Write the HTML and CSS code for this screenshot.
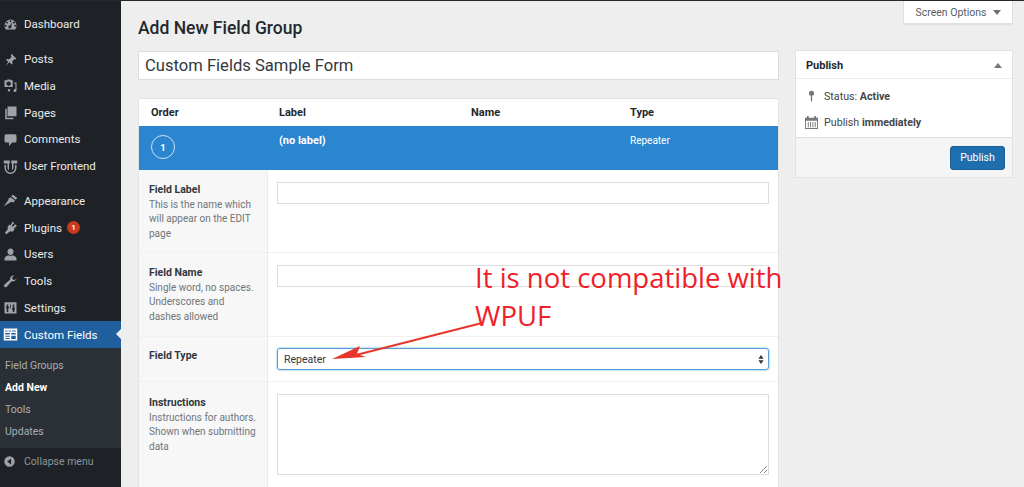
FILE: index.html
```html
<!DOCTYPE html>
<html lang="en">
<head>
<meta charset="utf-8">
<title>Add New Field Group</title>
<link rel="stylesheet" href="styles.css">
</head>
<body>
<div class="app">
  <nav class="sidebar">
    <ul class="menu first">
      <li class="item"><svg class="ico" viewBox="0 0 20 20"><path d="M3.800 16.500A8 8 0 1 1 16.200 16.500ZM10 4.200a1.200 1.200 0 1 0 .01 0ZM5.400 6.200a1.200 1.200 0 1 0 .01 0ZM14.600 6.200a1.200 1.200 0 1 0 .01 0ZM3.600 10.400a1.200 1.200 0 1 0 .01 0ZM16.400 10.400a1.200 1.200 0 1 0 .01 0ZM12.800 6.800 9.200 11.200a2 2 0 1 0 1.700 1Z" fill-rule="evenodd"/></svg>Dashboard</li>
    </ul>
    <ul class="menu">
      <li class="item"><svg class="ico" viewBox="0 0 20 20"><path d="M11 2l7 7-1.400 1-1.200-.6-3 3 .4 3.100-1.200 1.200-3-3-5.600 5L7 13.400l-3-3 1.200-1.200 3.100.4 3-3-.6-1.200Z"/></svg>Posts</li>
      <li class="item"><svg class="ico" viewBox="0 0 20 20"><path fill-rule="evenodd" d="M2 3h3l1-1h4l1 1h2v9H2ZM7.500 4.500a3 3 0 1 0 .01 0ZM15 6h3v10.500a2 2 0 1 1-2-2h.6V7.500H15ZM8 14.500a1.700 1.700 0 1 1-1.700 1.700 1.700 1.700 0 0 1 1.700-1.700Z"/></svg>Media</li>
      <li class="item"><svg class="ico" viewBox="0 0 20 20"><path d="M6 2h12v13H6Z"/><path d="M3 5h2v12h9v2H3Z"/></svg>Pages</li>
      <li class="item"><svg class="ico" viewBox="0 0 20 20"><path d="M4 3h12a2 2 0 0 1 2 2v7a2 2 0 0 1-2 2h-4l-4 5v-5H4a2 2 0 0 1-2-2V5a2 2 0 0 1 2-2Z"/></svg>Comments</li>
      <li class="item"><svg class="ico" viewBox="0 0 20 20"><path d="M1 2h18v4h-5v6a4 4 0 0 1-2 3v-9h-1V2H9v4H8v9a4 4 0 0 1-2-3V6H1ZM2 8h2v4a6 6 0 0 0 12 0V8h2v4a8 8 0 0 1-16 0Z"/></svg>User Frontend</li>
    </ul>
    <ul class="menu">
      <li class="item"><svg class="ico" viewBox="0 0 20 20"><path d="M13 2l6 4.500-2 2.500-6-4.500ZM10 5.500l6 4.500-2 2.500-3-1L1 18l6.500-9.500-.5-1Z"/></svg>Appearance</li>
      <li class="item"><svg class="ico" viewBox="0 0 20 20"><path d="M13 2l2 2-3.500 3.500 1.500 1.500 3.500-3.500 2 2-4 4 1 1-3 3-3-.5-5 4-2-2 4-5-.5-3 3-3 1 1Z"/></svg>Plugins<span class="badge">1</span></li>
      <li class="item"><svg class="ico" viewBox="0 0 20 20"><path d="M10 2a4 4 0 0 1 4 4.500c0 2-1.500 4-4 4s-4-2-4-4A4 4 0 0 1 10 2ZM2 15.500c0-2.500 3-3.500 5-4.500 1.500 1 4.500 1 6 0 2 1 5 2 5 4.500V18H2Z"/></svg>Users</li>
      <li class="item"><svg class="ico" viewBox="0 0 20 20"><path d="M18 5a5 5 0 0 1-6.500 4.800L5 17a2 2 0 0 1-3-3l7.200-6.500A5 5 0 0 1 15 2l-3 3 1.500 2.500L16 8Z"/></svg>Tools</li>
      <li class="item"><svg class="ico" viewBox="0 0 20 20"><path fill-rule="evenodd" d="M2 3h16v15H2ZM5 6v3H4v2h1v5h2v-5h1V9H7V6Zm8 0v5h-1v2h1v3h2v-3h1v-2h-1V6ZM9.500 6v5h1V6Z"/></svg>Settings</li>
      <li class="item active"><svg class="ico" viewBox="0 0 20 20"><path fill-rule="evenodd" d="M1 2h18v16H1ZM3 4.500v1.500h3V4.500Zm4.500 0v1.500h3V4.500Zm4.500 0v1.500h5V4.500ZM3 8v2h6V8Zm0 3.500V13h6v-1.500ZM3 14.500V16h6v-1.500ZM11 8v2h6V8Zm0 3.500V16h6v-4.500Z"/></svg>Custom Fields</li>
    </ul>
    <ul class="submenu">
      <li>Field Groups</li>
      <li class="current">Add New</li>
      <li>Tools</li>
      <li>Updates</li>
    </ul>
    <div class="collapse"><svg class="ico" viewBox="0 0 20 20"><path fill-rule="evenodd" d="M10 2a8 8 0 1 1 0 16 8 8 0 0 1 0-16Zm2.500 3.500L6.500 10l6 4.500Z"/></svg>Collapse menu</div>
  </nav>

  <main class="content">
    <div class="screen-bar"><div class="screen-options">Screen Options<span class="caret-down"></span></div></div>
    <div class="columns">
      <section class="primary">
        <h1 class="page-title">Add New Field Group</h1>
        <div class="title-input">Custom Fields Sample Form</div>

        <div class="fields">
          <div class="fields-head">
            <span class="col-order">Order</span>
            <span class="col-label">Label</span>
            <span class="col-name">Name</span>
            <span class="col-type">Type</span>
          </div>
          <div class="field-bar">
            <span class="col-order"><span class="order-circle">1</span></span>
            <strong class="col-label">(no label)</strong>
            <span class="col-name"></span>
            <span class="col-type bar-type">Repeater</span>
          </div>
          <div class="row row-label">
            <div class="row-side"><b>Field Label</b><p>This is the name which will appear on the EDIT page</p></div>
            <div class="row-main"><div class="text-input"></div></div>
          </div>
          <div class="row row-name">
            <div class="row-side"><b>Field Name</b><p>Single word, no spaces. Underscores and dashes allowed</p></div>
            <div class="row-main"><div class="text-input"></div></div>
          </div>
          <div class="row row-type">
            <div class="row-side"><b>Field Type</b></div>
            <div class="row-main"><div class="select">Repeater<svg class="updown" viewBox="0 0 8 12"><path d="M4 0l3.500 5H.5ZM4 12 .5 7h7Z"/></svg></div></div>
          </div>
          <div class="row row-instr">
            <div class="row-side"><b>Instructions</b><p>Instructions for authors. Shown when submitting data</p></div>
            <div class="row-main"><div class="textarea"><svg class="grip" viewBox="0 0 8 8"><path d="M8 1 1 8M8 5 5 8" stroke="#888" fill="none"/></svg></div></div>
          </div>
        </div>
      </section>

      <aside class="side">
        <div class="publish">
          <div class="publish-head"><b>Publish</b><span class="caret-up"></span></div>
          <div class="publish-body">
            <div class="pub-line"><svg class="pub-ico" viewBox="0 0 12 20"><path d="M6 1a4 4 0 0 1 1 7.900V16l-1 3-1-3V8.900A4 4 0 0 1 6 1Z"/></svg>Status:&nbsp;<b>Active</b></div>
            <div class="pub-line"><svg class="pub-ico cal" viewBox="0 0 14 14"><path fill-rule="evenodd" d="M0 2h2V0h2v2h6V0h2v2h2v12H0Zm1 3v8h12V5ZM3 6.500h1V12H3Zm2.500 0h1V12h-1Zm2.500 0h1V12H8Zm2.500 0h1V12h-1Z"/></svg>Publish&nbsp;<b>immediately</b></div>
          </div>
          <div class="publish-foot"><span class="btn">Publish</span></div>
        </div>
      </aside>
    </div>
  </main>
</div>

<div class="note">It is not compatible with<br>WPUF</div>
<svg class="arrow" viewBox="0 0 160 50"><path d="M150 6 24 38" stroke="#e8352b" stroke-width="2" fill="none"/><path d="M0 42 28 29 25 37 34 40Z" fill="#e8352b"/></svg>
</body>
</html>
```
FILE: styles.css
```css
* { box-sizing: border-box; }
html, body { margin: 0; height: 100%; overflow: hidden; }
body {
  background: #eeeeee;
  color: #23282d;
  font-family: Roboto, "Liberation Sans", sans-serif;
  font-size: 11px;
  border-top: 1px solid #23282d;
  position: relative;
}
ul { list-style: none; margin: 0; padding: 0; }
p { margin: 0; }

.app { display: flex; height: 486px; overflow: hidden; }

/* Sidebar */
.sidebar {
  width: 121px;
  flex: none;
  background: #1e2226;
  color: #eee;
  font-size: 11.500px;
  padding-top: 10px;
}
.menu { margin-bottom: 8px; }
.item {
  height: 26.750px;
  display: flex;
  align-items: center;
  padding-left: 3px;
  color: #e9ebec;
  position: relative;
}
.ico {
  width: 15px;
  height: 15px;
  margin-right: 6px;
  fill: #9ea3a8;
  flex: none;
}
.badge {
  width: 13px;
  height: 13px;
  border-radius: 50%;
  background: #ca3a1f;
  color: #fff;
  font-size: 8px;
  font-weight: 700;
  display: flex;
  align-items: center;
  justify-content: center;
  margin-left: 5px;
}
.menu:nth-child(3) { margin-bottom: 0; }
.active { background: #1f5f9d; color: #fff; }
.active .ico { fill: #fff; }
.active::after {
  content: "";
  position: absolute;
  right: 0;
  top: 8px;
  border: 5.500px solid transparent;
  border-right-color: #eeeeee;
  border-left-width: 0;
}
.submenu {
  background: #2b3036;
  padding: 7px 0 0;
  height: 100px;
  font-size: 10.500px;
  color: #a9adb1;
}
.submenu li { height: 22px; line-height: 22px; padding-left: 5px; }
.submenu .current { color: #fff; font-weight: 700; }
.collapse {
  display: flex;
  align-items: center;
  height: 26px;
  padding-left: 3px;
  font-size: 10.500px;
  color: #8f9498;
}
.collapse .ico { width: 13px; height: 13px; margin-right: 8px; }

/* Content */
.content { flex: 1; padding-left: 17px; min-width: 0; }
.screen-bar { height: 0; display: flex; justify-content: flex-end; padding-right: 11px; }
.screen-options {
  width: 110px;
  height: 23px;
  flex: none;
  background: #fff;
  border: 1px solid #e0e0e0;
  border-top: 0;
  box-shadow: 0 1px 1px rgba(0,0,0,.05);
  display: flex;
  align-items: center;
  justify-content: center;
  color: #555d66;
  font-size: 10.500px;
}
.caret-down {
  border: 4px solid transparent;
  border-top: 5px solid #6a7076;
  border-bottom: 0;
  margin-left: 6px;
}
.columns { display: flex; gap: 16px; width: 875px; }
.primary { width: 641px; flex: none; }
.page-title {
  margin: 0;
  height: 50px;
  padding-top: 17px;
  font-size: 17.500px;
  line-height: 20px;
  font-weight: 500;
  color: #23282d;
}
.title-input {
  height: 29px;
  background: #fff;
  border: 1px solid #ddd;
  padding-left: 6px;
  font-size: 16.600px;
  line-height: 28px;
  color: #32373c;
}
.fields {
  margin-top: 18px;
  background: #fff;
  border: 1px solid #e2e2e2;
  border-bottom: 0;
  height: 400px;
}
.fields-head, .field-bar { display: grid; grid-template-columns: 140px 192px 159px 1fr; }
.fields-head {
  height: 27px;
  align-items: center;
  font-weight: 700;
  font-size: 11px;
  color: #23282d;
}
.col-order { padding-left: 12px; }
.field-bar {
  height: 44px;
  background: #2b85cf;
  color: #fff;
  padding-top: 8px;
}
.field-bar .col-label { font-size: 11px; line-height: 13px; }
.bar-type { font-size: 10px; line-height: 13px; }
.order-circle {
  width: 24px;
  height: 24px;
  border: 1px solid #cfe4f5;
  border-radius: 50%;
  display: flex;
  align-items: center;
  justify-content: center;
  font-size: 9.500px;
  font-weight: 700;
  margin-top: 1px;
}
.row { display: flex; border-bottom: 1px solid #f0f0f0; }
.row-label { height: 83px; }
.row-name { height: 84px; }
.row-type { height: 45px; }
.row-instr { height: 118px; border-bottom: 0; }
.row-side {
  width: 129px;
  flex: none;
  background: #f7f7f7;
  border-right: 1px solid #eaeaea;
  padding: 13px 10px 0 10px;
  font-size: 10px;
  line-height: 14.300px;
  color: #6f757a;
}
.row-type .row-side { padding-top: 12px; }
.row-instr .row-side { padding-top: 14px; }
.row-side b { display: block; color: #32373c; font-size: 10.500px; line-height: 13px; margin-bottom: 2px; }
.row-main { flex: 1; padding: 12px 9px 0; }
.row-type .row-main { padding-top: 11px; }
.text-input { height: 22px; border: 1px solid #ddd; background: #fff; }
.select {
  height: 22px;
  border: 1px solid #5b9dd9;
  border-radius: 3px;
  box-shadow: 0 0 2px rgba(30,140,190,.8);
  display: flex;
  align-items: center;
  justify-content: space-between;
  padding: 0 4px 0 6px;
  font-size: 10.500px;
  color: #32373c;
}
.updown { width: 6px; height: 9px; fill: #32373c; }
.textarea {
  height: 81px;
  border: 1px solid #ddd;
  position: relative;
}
.grip { position: absolute; right: 1px; bottom: 1px; width: 8px; height: 8px; }

/* Publish box */
.side { width: 218px; flex: none; padding-top: 49px; }
.publish { background: #fff; border: 1px solid #e2e2e2; height: 128px; }
.publish-head {
  height: 28px;
  display: flex;
  align-items: center;
  justify-content: space-between;
  padding: 1px 10px 0;
  border-bottom: 1px solid #eee;
  font-size: 11px;
}
.caret-up { border: 4px solid transparent; border-bottom: 5px solid #72777c; border-top: 0; }
.publish-body { height: 58px; padding-top: 4px; }
.pub-line {
  height: 26.500px;
  display: flex;
  align-items: center;
  padding-left: 9px;
  font-size: 10.700px;
  color: #444;
}
.pub-ico { width: 13px; height: 13px; margin-right: 6px; fill: #777; flex: none; }
.publish-foot {
  height: 40px;
  background: #f5f5f5;
  border-top: 1px solid #ddd;
  display: flex;
  align-items: center;
  justify-content: flex-end;
  padding-right: 7px;
}
.btn {
  width: 55px;
  height: 24px;
  background: #1f6fae;
  border: 1px solid #1a5f96;
  border-radius: 3px;
  color: #fff;
  font-size: 10.500px;
  display: flex;
  align-items: center;
  justify-content: center;
}

/* Annotation over the page */
.note {
  position: absolute;
  left: 475px;
  top: 258px;
  font-family: "Open Sans", sans-serif;
  font-size: 27.500px;
  line-height: 38px;
  color: #ef2028;
  white-space: nowrap;
}
.arrow { position: absolute; left: 332px; top: 316px; width: 160px; height: 50px; }
```
